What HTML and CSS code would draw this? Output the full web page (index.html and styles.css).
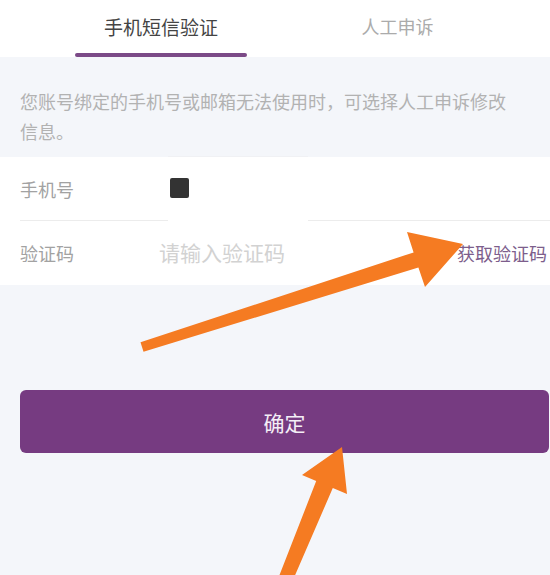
FILE: index.html
```html
<!DOCTYPE html>
<html lang="zh-CN">
<head>
    <title>账号验证</title>
    <meta charset="UTF-8">
    <meta name="viewport" content="width=device-width, initial-scale=1.0">
    <link rel="stylesheet" href="styles.css">
</head>
<body>
    <div class="tabs">
        <div class="tab tab-activa">
            <span class="tab-texto">手机短信验证</span>
            <span class="tab-barra"></span>
        </div>
        <div class="tab">
            <span class="tab-texto">人工申诉</span>
            <span class="tab-barra"></span>
        </div>
    </div>

    <div class="aviso">您账号绑定的手机号或邮箱无法使用时，可选择人工申诉修改信息。</div>

    <div class="formulario">
        <div class="fila fila-linea">
            <span class="etiqueta">手机号</span>
            <span class="numero"></span>
            <div class="tapa"></div>
        </div>
        <div class="fila">
            <span class="etiqueta">验证码</span>
            <span class="placeholder">请输入验证码</span>
            <span class="obtener">获取验证码</span>
        </div>
    </div>

    <div class="contenedor-boton">
        <button class="boton">确定</button>
    </div>

    <svg class="flechas" width="550" height="575" viewBox="0 0 550 575">
        <polygon points="140.5,342.2 413.6,252.4 407,232 463,244 425,287 418.4,267.6 143.5,351.8" fill="#f57b22"/>
        <polygon points="274.7,587.3 316.2,481 302,475 342,447 347,494 332.8,488 287.5,592.7" fill="#f57b22"/>
    </svg>
</body>
</html>
```

FILE: styles.css
```css
body {
    margin: 0;
    position: relative;
    height: 575px;
    overflow: hidden;
    background-color: #f4f6fa;
    font-family: "Noto Sans CJK SC", "Noto Sans", sans-serif;
}

.tabs {
    display: flex;
    height: 57px;
    padding-left: 75px;
    background-color: #fff;
}

.tab {
    display: flex;
    flex-direction: column;
    align-items: center;
    width: 172px;
}

.tab + .tab {
    width: 301px;
}

.tab-texto {
    height: 53px;
    line-height: 53px;
    font-size: 18px;
    color: #ababab;
}

.tab-activa .tab-texto {
    font-size: 19px;
    color: #444;
}

.tab-barra {
    display: block;
    width: 100%;
    height: 4px;
    border-radius: 2px;
}

.tab-activa .tab-barra {
    background-color: #7b4a87;
}

.aviso {
    padding: 29px 30px 11px 20px;
    font-size: 18px;
    line-height: 30px;
    color: #b2b2b2;
}

.formulario {
    background-color: #fff;
    padding-left: 20px;
}

.fila {
    position: relative;
    display: flex;
    align-items: center;
    height: 64px;
    padding-right: 3px;
}

.fila-linea {
    border-bottom: 1px solid #ececec;
    height: 63px;
}

.etiqueta {
    width: 139px;
    flex-shrink: 0;
    font-size: 18px;
    color: #a2a2a2;
}

.numero {
    width: 19px;
    height: 20px;
    margin-left: 11px;
    margin-top: -2px;
    border-radius: 2px;
    background-color: #333;
    position: relative;
    z-index: 1;
}

.tapa {
    position: absolute;
    left: 148px;
    top: 0;
    width: 140px;
    height: 64px;
    background-color: #fff;
    border-top: 1px solid #f0f1f4;
    margin-top: -1px;
}

.placeholder {
    font-size: 21px;
    color: #d2d2d2;
    margin-top: -2px;
}

.obtener {
    margin-left: auto;
    font-size: 18px;
    color: #7d5e8c;
}

.contenedor-boton {
    margin-top: 105px;
    padding-left: 20px;
}

.boton {
    display: block;
    width: 529px;
    height: 63px;
    border: none;
    border-radius: 6px;
    background-color: #763b81;
    color: #f4eef6;
    font-family: "Noto Sans CJK SC", sans-serif;
    font-size: 21px;
    cursor: pointer;
}

.flechas {
    position: absolute;
    top: 0;
    left: 0;
    pointer-events: none;
}
```
